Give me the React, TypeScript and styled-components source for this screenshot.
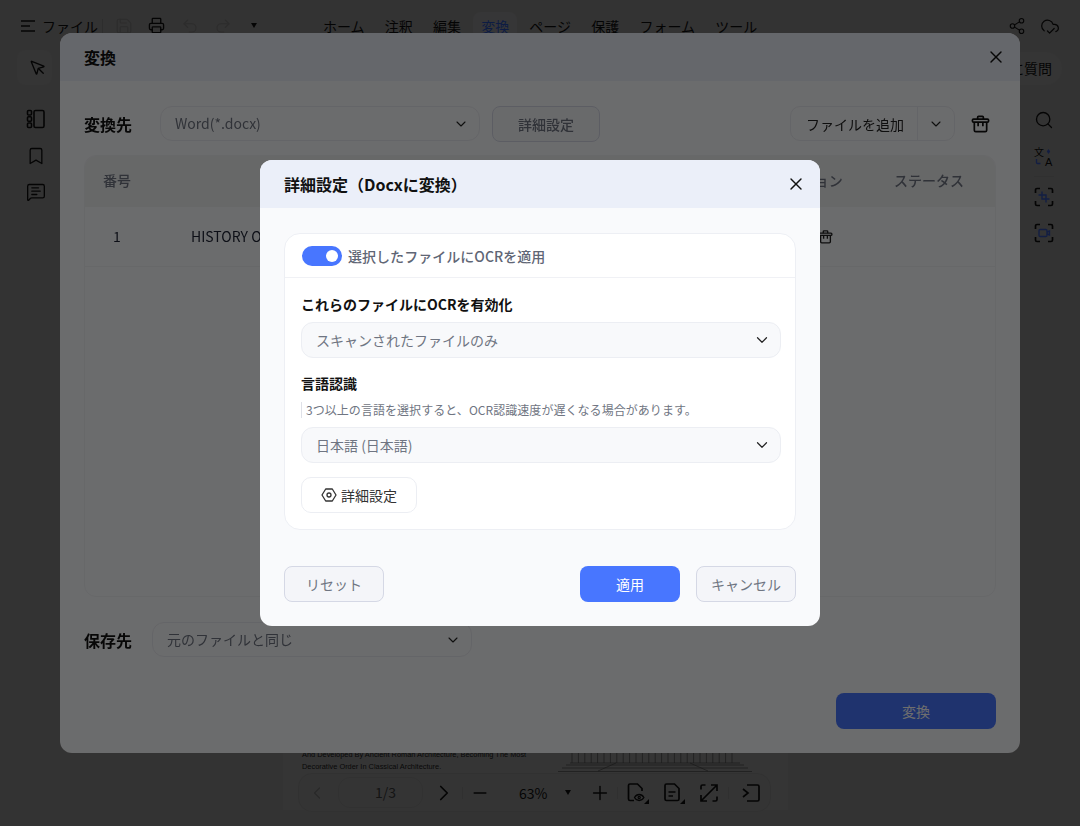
import styled, { createGlobalStyle } from 'styled-components';
import {
  Bookmark,
  ChevronDown,
  ChevronLeft,
  ChevronRight,
  CloudCheck,
  MessageSquareText,
  Minus,
  MousePointer,
  Plus,
  Printer,
  Redo2,
  Save,
  Search,
  Share2,
  Undo2,
  X,
} from 'lucide-react';

const GlobalStyle = createGlobalStyle`
  html, body {
    margin: 0;
    padding: 0;
    height: 826px;
    overflow: hidden;
    background: #abaaaa;
    font-family: 'Noto Sans CJK JP', 'Noto Sans', sans-serif;
  }
  * { box-sizing: border-box; }
`;

const menus = ['ホーム', '注釈', '編集', '変換', 'ページ', '保護', 'フォーム', 'ツール'];

const PanelIcon = () => (
  <svg width='20' height='20' viewBox='0 0 20 20' fill='none' stroke='currentColor' strokeWidth='1.6'>
    <rect x='1.5' y='1.5' width='4' height='4.5' rx='1' />
    <rect x='1.5' y='7.8' width='4' height='4.5' rx='1' />
    <rect x='1.5' y='14' width='4' height='4.5' rx='1' />
    <rect x='8' y='1.5' width='10' height='17' rx='1.5' />
  </svg>
);

const Corners = () => (
  <path d='M6 1.500H3A1.500 1.500 0 0 0 1.500 3v3M14 1.500h3A1.500 1.500 0 0 1 18.500 3v3M1.500 14v3A1.500 1.500 0 0 0 3 18.500h3M18.500 14v3a1.500 1.500 0 0 1-1.500 1.500h-3' />
);

const CropIcon = () => (
  <svg width='20' height='20' viewBox='0 0 20 20' fill='none' stroke='currentColor' strokeWidth='1.700'>
    <Corners />
    <path d='M8 4.500V12h7.500M4.500 8H12v7.500' stroke='#3f66e0' strokeWidth='1.400' />
  </svg>
);

const RecordIcon = () => (
  <svg width='20' height='20' viewBox='0 0 20 20' fill='none' stroke='currentColor' strokeWidth='1.700'>
    <Corners />
    <rect x='5' y='6.500' width='8' height='7' rx='1.200' stroke='#3f66e0' strokeWidth='1.400' />
    <path d='M13 9l2.500-1v4L13 11' stroke='#3f66e0' strokeWidth='1.400' />
  </svg>
);

const TranslateIcon = () => (
  <TranslateSvg width='20' height='20' viewBox='0 0 20 20' fill='currentColor'>
    <text x='0' y='9.500' fontSize='10' fontFamily="'Noto Sans CJK JP', sans-serif">文</text>
    <text x='11' y='19.500' fontSize='11' fontWeight='500' fontFamily="'Liberation Sans', sans-serif">A</text>
    <path d='M14.500 3l1.700 2.500-1.700 2.500-1.700-2.500z' fill='#3f66e0' />
    <path d='M2.500 13v3.500a1 1 0 0 0 1 1h3' fill='none' stroke='#3f66e0' strokeWidth='1.400' />
  </TranslateSvg>
);

const HexIcon = () => (
  <svg width='16' height='16' viewBox='0 0 16 16' fill='none' stroke='currentColor' strokeWidth='1.300'>
    <path d='M4.700 2h6.600L15 8l-3.700 6H4.700L1 8z' strokeLinejoin='round' />
    <circle cx='8' cy='8' r='2' />
  </svg>
);

const BasketIcon = ({ size }: { size: number }) => (
  <svg width={size} height={size} viewBox='0 0 20 20' fill='none' stroke='currentColor' strokeWidth='1.800' strokeLinejoin='round'>
    <path d='M7 5.500V3.500a1 1 0 0 1 1-1h4a1 1 0 0 1 1 1v2' />
    <rect x='1.500' y='5.500' width='17' height='3' rx='1.200' />
    <path d='M3.500 8.500v8.500a1.500 1.500 0 0 0 1.500 1.500h10a1.500 1.500 0 0 0 1.500-1.500V8.500' />
    <path d='M7.500 8.500v4.500M12.500 8.500v4.500' />
  </svg>
);

const FileEyeIcon = () => (
  <svg width='24' height='22' viewBox='0 0 24 22' fill='none' stroke='currentColor' strokeWidth='1.700'>
    <path d='M8 18.500H4A1.500 1.500 0 0 1 2.500 17V3.500A1.500 1.500 0 0 1 4 2h7.500L16 6.500V9' />
    <path d='M8.500 15.500c1.200-2 2.900-3 4.700-3s3.500 1 4.700 3c-1.200 2-2.900 3-4.700 3s-3.500-1-4.700-3z' strokeWidth='1.300' />
    <circle cx='13.200' cy='15.500' r='1.100' strokeWidth='1.200' />
    <path d='M23 17v5h-5z' fill='currentColor' stroke='none' />
  </svg>
);

const FileTextIcon = () => (
  <svg width='24' height='22' viewBox='0 0 24 22' fill='none' stroke='currentColor' strokeWidth='1.700'>
    <path d='M4.500 2h8L17 6.500v10.500a1.500 1.500 0 0 1-1.500 1.500h-11A1.500 1.500 0 0 1 3 17V3.500A1.500 1.500 0 0 1 4.500 2z' />
    <path d='M6.500 10h7M6.500 14h4.500' strokeWidth='1.400' />
    <path d='M23 17v5h-5z' fill='currentColor' stroke='none' />
  </svg>
);

const ExpandIcon = () => (
  <svg width='20' height='20' viewBox='0 0 20 20' fill='none' stroke='currentColor' strokeWidth='1.700'>
    <path d='M6.500 2H3.500A1.500 1.500 0 0 0 2 3.500v3M13.500 18h3a1.500 1.500 0 0 0 1.500-1.500v-3M12 2h6v6M8 18H2v-6M17.500 2.500l-15 15' />
  </svg>
);

const ExitIcon = () => (
  <svg width='20' height='20' viewBox='0 0 20 20' fill='none' stroke='currentColor' strokeWidth='1.700'>
    <path d='M6 2h10.500A1.500 1.500 0 0 1 18 3.500v13a1.500 1.500 0 0 1-1.500 1.500H6' />
    <path d='M2 6l5 4-5 4' />
  </svg>
);

const MenuLinesIcon = () => (
  <svg width='14' height='12' viewBox='0 0 14 12' fill='none' stroke='currentColor' strokeWidth='1.500'>
    <path d='M0 1h14M0 6h9M0 11h14' />
  </svg>
);

const Temple = () => (
  <svg width='194' height='24' viewBox='0 0 194 24' fill='none' stroke='#4a4a4a' strokeWidth='0.600'>
    {Array.from({ length: 26 }, (_, i) => (
      <path key={i} d={`M${14 + i * 6.400} 0v15`} />
    ))}
    <path d='M12 15h170M8 17h178M4 20h186M0 23.500h194M40 23l18-8M150 23l-18-8' />
  </svg>
);

const App = () => {
  return (
    <>
      <GlobalStyle />
      <Page>
        <TopBar>
          <FileGroup>
            <MenuLinesIcon />
            <FileLabel>ファイル</FileLabel>
            <VSep />
            <QuickIcon $dim><Save size={18} strokeWidth={1.5} /></QuickIcon>
            <QuickIcon><Printer size={17} strokeWidth={1.9} /></QuickIcon>
            <QuickIcon $dim><Undo2 size={18} strokeWidth={1.5} /></QuickIcon>
            <QuickIcon $dim><Redo2 size={18} strokeWidth={1.5} /></QuickIcon>
            <Caret />
          </FileGroup>
          <MenuList>
            {menus.map((menu) => (
              <MenuItem key={menu} $active={menu === '変換'}>{menu}</MenuItem>
            ))}
          </MenuList>
          <TopRight>
            <Share2 size={18} strokeWidth={1.5} />
            <CloudCheck size={20} strokeWidth={1.5} />
          </TopRight>
        </TopBar>

        <Workspace>
          <LeftRail>
            <PointerBox><MousePointer size={18} strokeWidth={1.8} /></PointerBox>
            <RailIcons>
              <PanelIcon />
              <Bookmark size={20} strokeWidth={1.6} />
              <MessageSquareText size={20} strokeWidth={1.6} />
            </RailIcons>
          </LeftRail>

          <Canvas>
            <Doc>
              <DocFooter>
                <DocText>
                  And Developed By Ancient Roman Architecture, Becoming The Most
                  <br />
                  Decorative Order In Classical Architecture.
                </DocText>
                <Temple />
              </DocFooter>
            </Doc>
            <PageTools>
              <ToolSlot $w={20} $dim><ChevronLeft size={24} strokeWidth={1.5} /></ToolSlot>
              <PagePill>1/3</PagePill>
              <ToolSlot $w={42}><ChevronRight size={26} strokeWidth={1.6} /></ToolSlot>
              <ToolSep $back={3} />
              <ToolSlot $w={34}><Minus size={20} strokeWidth={1.7} /></ToolSlot>
              <ZoomText>63%</ZoomText>
              <Caret />
              <ToolSlot $w={34} $ml={12}><Plus size={22} strokeWidth={1.6} /></ToolSlot>
              <ToolSep />
              <ToolSlot $w={40}><FileEyeIcon /></ToolSlot>
              <ToolSlot $w={32}><FileTextIcon /></ToolSlot>
              <ToolSlot $w={38}><ExpandIcon /></ToolSlot>
              <ToolSep />
              <ToolSlot $w={38} $ml={3}><ExitIcon /></ToolSlot>
            </PageTools>
          </Canvas>

          <RightRail>
            <AskPill>に質問</AskPill>
            <RailTools>
              <Search size={20} strokeWidth={1.6} />
              <TranslateIcon />
              <RailSep />
              <CropIcon />
              <RecordIcon />
            </RailTools>
          </RightRail>
        </Workspace>
      </Page>

      <Overlay $alpha={0.3}>
        <ConvertDialog>
          <DialogHeader>
            <OuterTitle>変換</OuterTitle>
            <X size={20} strokeWidth={1.7} color='#111' />
          </DialogHeader>
          <ConvertBody>
            <OptionRow>
              <RowLabel>変換先</RowLabel>
              <OuterSelect>
                <SelectValue>Word(*.docx)</SelectValue>
                <ChevronDown size={16} strokeWidth={1.6} color='#222' />
              </OuterSelect>
              <GhostButton>詳細設定</GhostButton>
              <AddFile>
                <AddMain>ファイルを追加</AddMain>
                <AddMore><ChevronDown size={16} strokeWidth={1.6} /></AddMore>
              </AddFile>
              <ClearIcon><BasketIcon size={19} /></ClearIcon>
            </OptionRow>

            <FileTable>
              <TableHead>
                <HeadCell $align='center'>番号</HeadCell>
                <HeadCell />
                <HeadCell $align='center'>アクション</HeadCell>
                <HeadCell $align='center' $pad={5}>ステータス</HeadCell>
              </TableHead>
              <TableRow>
                <RowCell $align='center'>1</RowCell>
                <RowCell $pad={42}>HISTORY OF ARCHITECTURE.pdf</RowCell>
                <ActionCell>
                  <BasketIcon size={15} />
                  <BasketIcon size={15} />
                  <BasketIcon size={15} />
                </ActionCell>
                <RowCell />
              </TableRow>
            </FileTable>

            <SaveRow>
              <RowLabel>保存先</RowLabel>
              <OuterSelect>
                <SelectValue>元のファイルと同じ</SelectValue>
                <ChevronDown size={16} strokeWidth={1.6} color='#222' />
              </OuterSelect>
            </SaveRow>

            <ConvertFooter>
              <ConvertButton>変換</ConvertButton>
            </ConvertFooter>
          </ConvertBody>
        </ConvertDialog>
      </Overlay>

      <Overlay $alpha={0.57}>
        <SettingsDialog>
          <DialogHeader>
            <InnerTitle>詳細設定（Docxに変換）</InnerTitle>
            <X size={20} strokeWidth={1.7} color='#111' />
          </DialogHeader>
          <SettingsBody>
            <OcrCard>
              <ToggleRow>
                <Toggle><Knob /></Toggle>
                <ToggleLabel>選択したファイルにOCRを適用</ToggleLabel>
              </ToggleRow>
              <CardFields>
                <FieldTitle>これらのファイルにOCRを有効化</FieldTitle>
                <InnerSelect>
                  スキャンされたファイルのみ
                  <ChevronDown size={18} strokeWidth={1.6} color='#222' />
                </InnerSelect>
                <LanguageTitle>言語認識</LanguageTitle>
                <Hint>3つ以上の言語を選択すると、OCR認識速度が遅くなる場合があります。</Hint>
                <InnerSelect>
                  日本語 (日本語)
                  <ChevronDown size={18} strokeWidth={1.6} color='#222' />
                </InnerSelect>
                <MoreButton>
                  <HexIcon />
                  詳細設定
                </MoreButton>
              </CardFields>
            </OcrCard>
            <SettingsFooter>
              <SoftButton>リセット</SoftButton>
              <FooterRight>
                <PrimaryButton>適用</PrimaryButton>
                <SoftButton>キャンセル</SoftButton>
              </FooterRight>
            </SettingsFooter>
          </SettingsBody>
        </SettingsDialog>
      </Overlay>
    </>
  );
};

export default App;

const TranslateSvg = styled.svg`
  overflow: visible;
`;

const Page = styled.div`
  height: 826px;
  display: flex;
  flex-direction: column;
  color: #111;
`;

const TopBar = styled.div`
  height: 44px;
  padding: 7px 20px 0 21px;
  display: flex;
  align-items: center;
`;

const FileGroup = styled.div`
  width: 302px;
  display: flex;
  align-items: center;
`;

const FileLabel = styled.span`
  font-size: 14px;
  margin-left: 7px;
`;

const VSep = styled.span`
  width: 1px;
  height: 14px;
  background: #999;
  margin: 0 12px 0 4px;
`;

const QuickIcon = styled.span<{ $dim?: boolean }>`
  width: 33px;
  display: flex;
  justify-content: flex-start;
  opacity: ${({ $dim }) => ($dim ? 0.15 : 1)};
`;

const Caret = styled.span`
  width: 0;
  height: 0;
  margin-left: 4px;
  border-left: 3px solid transparent;
  border-right: 3px solid transparent;
  border-top: 5px solid #111;
`;

const MenuList = styled.div`
  display: flex;
  align-items: center;
  gap: 20.2px;
`;

const MenuItem = styled.span<{ $active?: boolean }>`
  font-size: 14px;
  line-height: 28px;
  color: ${({ $active }) => ($active ? '#2f5fe0' : '#111')};
  ${({ $active }) =>
    $active &&
    `
    margin: 0 -8px;
    padding: 0 8px;
    border-radius: 8px;
    background: #b4b4b6;
  `}
`;

const TopRight = styled.div`
  margin-left: auto;
  display: flex;
  align-items: center;
  gap: 14px;
`;

const Workspace = styled.div`
  flex: 1;
  display: flex;
  min-height: 0;
`;

const LeftRail = styled.div`
  width: 283px;
  padding: 6px 0 0 17px;
  display: flex;
  flex-direction: column;
`;

const PointerBox = styled.div`
  width: 35px;
  height: 35px;
  border-radius: 8px;
  background: #b0b0b0;
  display: flex;
  align-items: center;
  justify-content: center;
  padding-left: 6px;
`;

const RailIcons = styled.div`
  margin: 24px 0 0 9px;
  display: flex;
  flex-direction: column;
  gap: 16.5px;
`;

const Canvas = styled.div`
  width: 505px;
  position: relative;
  display: flex;
`;

const Doc = styled.div`
  width: 100%;
  height: 766px;
  background: #b0b0b0;
  display: flex;
  flex-direction: column;
  justify-content: flex-end;
`;

const DocFooter = styled.div`
  height: 62px;
  padding: 0 36px 0 19px;
  display: flex;
  justify-content: space-between;
`;

const DocText = styled.div`
  font-family: 'Liberation Sans', sans-serif;
  font-size: 7.4px;
  line-height: 11.5px;
  color: #222;
  white-space: nowrap;
  padding-top: 1px;
`;

const PageTools = styled.div`
  position: absolute;
  left: 15px;
  bottom: 14px;
  width: 473px;
  height: 39px;
  padding-left: 8px;
  display: flex;
  align-items: center;
  border: 1px solid #a4a4a4;
  border-radius: 14px;
  background: #aeaeae;
`;

const ToolSlot = styled.span<{ $w: number; $dim?: boolean; $ml?: number }>`
  width: ${({ $w }) => $w}px;
  margin-left: ${({ $ml }) => $ml || 0}px;
  flex-shrink: 0;
  display: flex;
  justify-content: center;
  opacity: ${({ $dim }) => ($dim ? 0.25 : 1)};
`;

const PagePill = styled.span`
  width: 85px;
  height: 31px;
  margin-left: 11px;
  border: 1px solid #a4a4a4;
  border-radius: 12px;
  padding-left: 36px;
  font-size: 14px;
  line-height: 29px;
  color: #444;
`;

const ToolSep = styled.span<{ $back?: number }>`
  width: 1px;
  height: 12px;
  flex-shrink: 0;
  margin-left: ${({ $back }) => -($back || 0)}px;
  background: #a0a0a0;
`;

const ZoomText = styled.span`
  width: 56px;
  margin-left: 9px;
  text-align: center;
  font-size: 14px;
`;

const RightRail = styled.div`
  flex: 1;
  padding: 8px 18px 0 0;
  display: flex;
  flex-direction: column;
  align-items: flex-end;
`;

const AskPill = styled.div`
  height: 33px;
  padding: 0 10px;
  border-radius: 16px;
  background: #b0b0b0;
  font-size: 14px;
  line-height: 33px;
`;

const RailTools = styled.div`
  margin: 25px 2px 0 0;
  width: 32px;
  display: flex;
  flex-direction: column;
  align-items: center;
  gap: 16px;
`;

const RailSep = styled.span`
  width: 20px;
  height: 1px;
  margin: -6px 0;
  background: #a0a0a0;
`;

const Overlay = styled.div<{ $alpha: number }>`
  position: fixed;
  inset: 0;
  padding-bottom: 40px;
  display: flex;
  align-items: center;
  justify-content: center;
  background: rgba(0, 0, 0, ${({ $alpha }) => $alpha});
`;

const DialogHeader = styled.div`
  height: 48px;
  padding: 0 14px 0 24px;
  display: flex;
  align-items: center;
  justify-content: space-between;
  background: #ebeff9;
`;

const OuterTitle = styled.div`
  font-size: 16px;
  font-weight: 700;
  color: #111;
`;

const InnerTitle = styled(OuterTitle)``;

const ConvertDialog = styled.div`
  width: 960px;
  height: 720px;
  border-radius: 12px;
  overflow: hidden;
  background: #f9fafc;
  display: flex;
  flex-direction: column;
`;

const ConvertBody = styled.div`
  flex: 1;
  padding: 25px 24px 24px;
  display: flex;
  flex-direction: column;
  min-height: 0;
`;

const OptionRow = styled.div`
  height: 35px;
  display: flex;
  align-items: center;
`;

const RowLabel = styled.div`
  width: 76px;
  font-size: 16px;
  font-weight: 700;
  color: #111;
`;

const OuterSelect = styled.div`
  width: 320px;
  height: 35px;
  padding: 0 10px 0 14px;
  border: 1px solid #e8eaf0;
  border-radius: 12px;
  display: flex;
  align-items: center;
  justify-content: space-between;
  font-size: 14px;
  color: #6f7582;
`;

const SelectValue = styled.span`
  margin-top: -2px;
`;

const GhostButton = styled.div`
  width: 108px;
  height: 36px;
  margin-left: 12px;
  border: 1px solid #d5d8e5;
  border-radius: 8px;
  background: #f4f5f9;
  display: flex;
  align-items: center;
  justify-content: center;
  font-size: 14px;
  font-weight: 500;
  color: #6f7582;
`;

const AddFile = styled.div`
  width: 165px;
  height: 35px;
  margin-left: auto;
  border: 1px solid #e8eaf0;
  border-radius: 10px;
  display: flex;
  font-size: 14px;
  color: #222;
`;

const AddMain = styled.div`
  flex: 1;
  padding-left: 2px;
  display: flex;
  align-items: center;
  justify-content: center;
  border-right: 1px solid #e8eaf0;
`;

const AddMore = styled.div`
  width: 36px;
  display: flex;
  align-items: center;
  justify-content: center;
`;

const ClearIcon = styled.div`
  width: 41px;
  padding-right: 6px;
  display: flex;
  justify-content: flex-end;
  color: #111;
`;

const FileTable = styled.div`
  flex: 1;
  margin-top: 14px;
  border: 1px solid #eef0f4;
  border-radius: 12px;
  overflow: hidden;
  min-height: 0;
`;

const TableHead = styled.div`
  height: 51px;
  padding-bottom: 3px;
  display: grid;
  grid-template-columns: 64px 1fr 100px 137px;
  align-items: center;
  background: #eff0f2;
`;

const TableRow = styled.div`
  height: 60px;
  padding-bottom: 1px;
  display: grid;
  grid-template-columns: 64px 1fr 100px 137px;
  align-items: center;
  border-bottom: 1px solid #eef0f4;
`;

const HeadCell = styled.div<{ $align?: string; $pad?: number }>`
  text-align: ${({ $align }) => $align || 'left'};
  padding-left: ${({ $pad }) => $pad || 0}px;
  font-size: 14px;
  font-weight: 500;
  color: #6f7582;
`;

const RowCell = styled.div<{ $align?: string; $pad?: number }>`
  text-align: ${({ $align }) => $align || 'left'};
  padding-left: ${({ $pad }) => $pad || 0}px;
  font-size: 14px;
  color: #1c2233;
`;

const ActionCell = styled.div`
  display: flex;
  justify-content: center;
  gap: 2px;
  color: #222;
`;

const SaveRow = styled(OptionRow)`
  margin-top: 25px;

  ${RowLabel} {
    width: 68px;
  }
`;

const ConvertFooter = styled.div`
  margin-top: 36px;
  display: flex;
  justify-content: flex-end;
`;

const ConvertButton = styled.div`
  width: 160px;
  height: 36px;
  border-radius: 8px;
  background: #4876ff;
  display: flex;
  align-items: center;
  justify-content: center;
  font-size: 14px;
  color: #fff;
`;

const SettingsDialog = styled.div`
  width: 560px;
  height: 466px;
  border-radius: 12px;
  overflow: hidden;
  background: #f9fafc;
  display: flex;
  flex-direction: column;
`;

const SettingsBody = styled.div`
  flex: 1;
  padding: 25px 24px 24px;
  display: flex;
  flex-direction: column;
  justify-content: space-between;
`;

const OcrCard = styled.div`
  height: 297px;
  border: 1px solid #edeff4;
  border-radius: 16px;
  background: #fff;
`;

const ToggleRow = styled.div`
  height: 44px;
  padding-left: 17px;
  display: flex;
  align-items: center;
  gap: 6px;
  border-bottom: 1px solid #f0f1f5;
`;

const Toggle = styled.div`
  width: 40px;
  height: 20px;
  padding: 0 4px;
  border-radius: 10px;
  background: #4876ff;
  display: flex;
  align-items: center;
  justify-content: flex-end;
`;

const Knob = styled.span`
  width: 12px;
  height: 12px;
  border-radius: 50%;
  background: #fff;
`;

const ToggleLabel = styled.span`
  font-size: 14px;
  font-weight: 500;
  letter-spacing: 0.04px;
  color: #5f6675;
`;

const CardFields = styled.div`
  padding: 16px 14px 0 16px;
  display: flex;
  flex-direction: column;
`;

const FieldTitle = styled.div`
  height: 20px;
  margin-bottom: 8px;
  font-size: 14px;
  line-height: 20px;
  font-weight: 700;
  color: #111;
`;

const LanguageTitle = styled(FieldTitle)`
  margin: 15px 0 9px;
`;

const Hint = styled.div`
  height: 16px;
  margin-bottom: 9px;
  padding-left: 4px;
  border-left: 1px solid #dfe1e8;
  font-size: 12px;
  line-height: 16px;
  letter-spacing: 0.05px;
  white-space: nowrap;
  color: #6f7582;
`;

const InnerSelect = styled.div`
  height: 36px;
  padding: 0 9px 0 14px;
  border: 1px solid #eceef3;
  border-radius: 12px;
  background: #f8f9fb;
  display: flex;
  align-items: center;
  justify-content: space-between;
  font-size: 14px;
  color: #6f7582;
`;

const MoreButton = styled.div`
  width: 116px;
  height: 36px;
  margin-top: 14px;
  border: 1px solid #eceef3;
  border-radius: 10px;
  display: flex;
  align-items: center;
  justify-content: center;
  gap: 4px;
  font-size: 14px;
  color: #333;
`;

const SettingsFooter = styled.div`
  display: flex;
  justify-content: space-between;
`;

const FooterRight = styled.div`
  display: flex;
  gap: 16px;
`;

const SoftButton = styled.div`
  width: 100px;
  height: 36px;
  border: 1px solid #d5d8e5;
  border-radius: 8px;
  background: #f4f5f9;
  display: flex;
  align-items: center;
  justify-content: center;
  font-size: 14px;
  color: #6f7582;
`;

const PrimaryButton = styled(SoftButton)`
  border: none;
  background: #4876ff;
  color: #fff;
`;
